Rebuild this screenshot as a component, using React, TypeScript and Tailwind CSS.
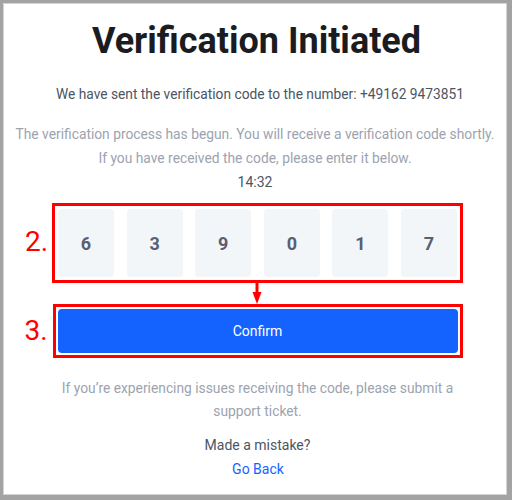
import React from "react";

const code = ["6", "3", "9", "0", "1", "7"];

const App = () => {
  return (
    <div className="w-[512px] h-[500px] bg-[#a3a3a3] pt-[3px] pl-[3px] pr-[5px] pb-[5px] font-['Roboto',sans-serif]">
      <div className="h-full border border-[#d4d4d4] bg-white flex flex-col items-center">
        <h1 className="mt-[15px] ml-[3px] text-[36px] leading-[44px] font-bold text-[#1b1c1f]">
          Verification Initiated
        </h1>
        <p className="mt-[19px] ml-[10px] text-[13.75px] leading-[24px] text-[#4b5563]">
          We have sent the verification code to the number: +49162 9473851
        </p>
        <p className="mt-[16px] text-[13.8px] leading-[24px] text-[#9ca3af] text-center">
          The verification process has begun. You will receive a verification code shortly.
          <br />
          If you have received the code, please enter it below.
        </p>
        <p className="text-[14px] leading-[24px] text-[#4b5563]">14:32</p>

        {/* 2. code inputs */}
        <div className="relative mt-[9px] ml-[5px] border-[3px] border-[#ff0000] p-[3px]">
          <span className="absolute -left-[30px] top-[20px] text-[28px] leading-[32px] text-[#ff0000]">
            2.
          </span>
          <div className="flex gap-[12.6px]">
            {code.map((d, i) => (
              <div
                key={i}
                className="w-[56px] h-[68px] rounded-[4px] bg-[#f3f6f9] flex items-center justify-center text-[18px] font-bold text-[#5a5e72]"
              >
                {d}
              </div>
            ))}
          </div>
        </div>

        <svg width="12" height="21" viewBox="0 0 12 21" className="ml-[3px]">
          <line x1="6" y1="0" x2="6" y2="11" stroke="#ff0000" strokeWidth="3" />
          <polygon points="1.5,9 10.5,9 6,21" fill="#ff0000" />
        </svg>

        {/* 3. confirm */}
        <div className="relative ml-[5px] border-[3px] border-[#ff0000] p-[2px]">
          <span className="absolute -left-[31px] top-[8px] text-[28px] leading-[32px] text-[#ff0000]">
            3.
          </span>
          <button className="w-[400px] h-[44px] rounded-[4px] bg-[#1463ff] text-white text-[14px]">
            Confirm
          </button>
        </div>

        <p className="mt-[19px] ml-[5px] w-[400px] text-center text-[13.8px] leading-[23px] text-[#9ca3af]">
          If you’re experiencing issues receiving the code, please submit a support ticket.
        </p>
        <p className="mt-[10px] ml-[5px] text-[14px] leading-[24px] text-[#4b5563]">Made a mistake?</p>
        <a className="ml-[6px] text-[14px] leading-[24px] text-[#1463ff]">Go Back</a>
      </div>
    </div>
  );
};

export default App;
